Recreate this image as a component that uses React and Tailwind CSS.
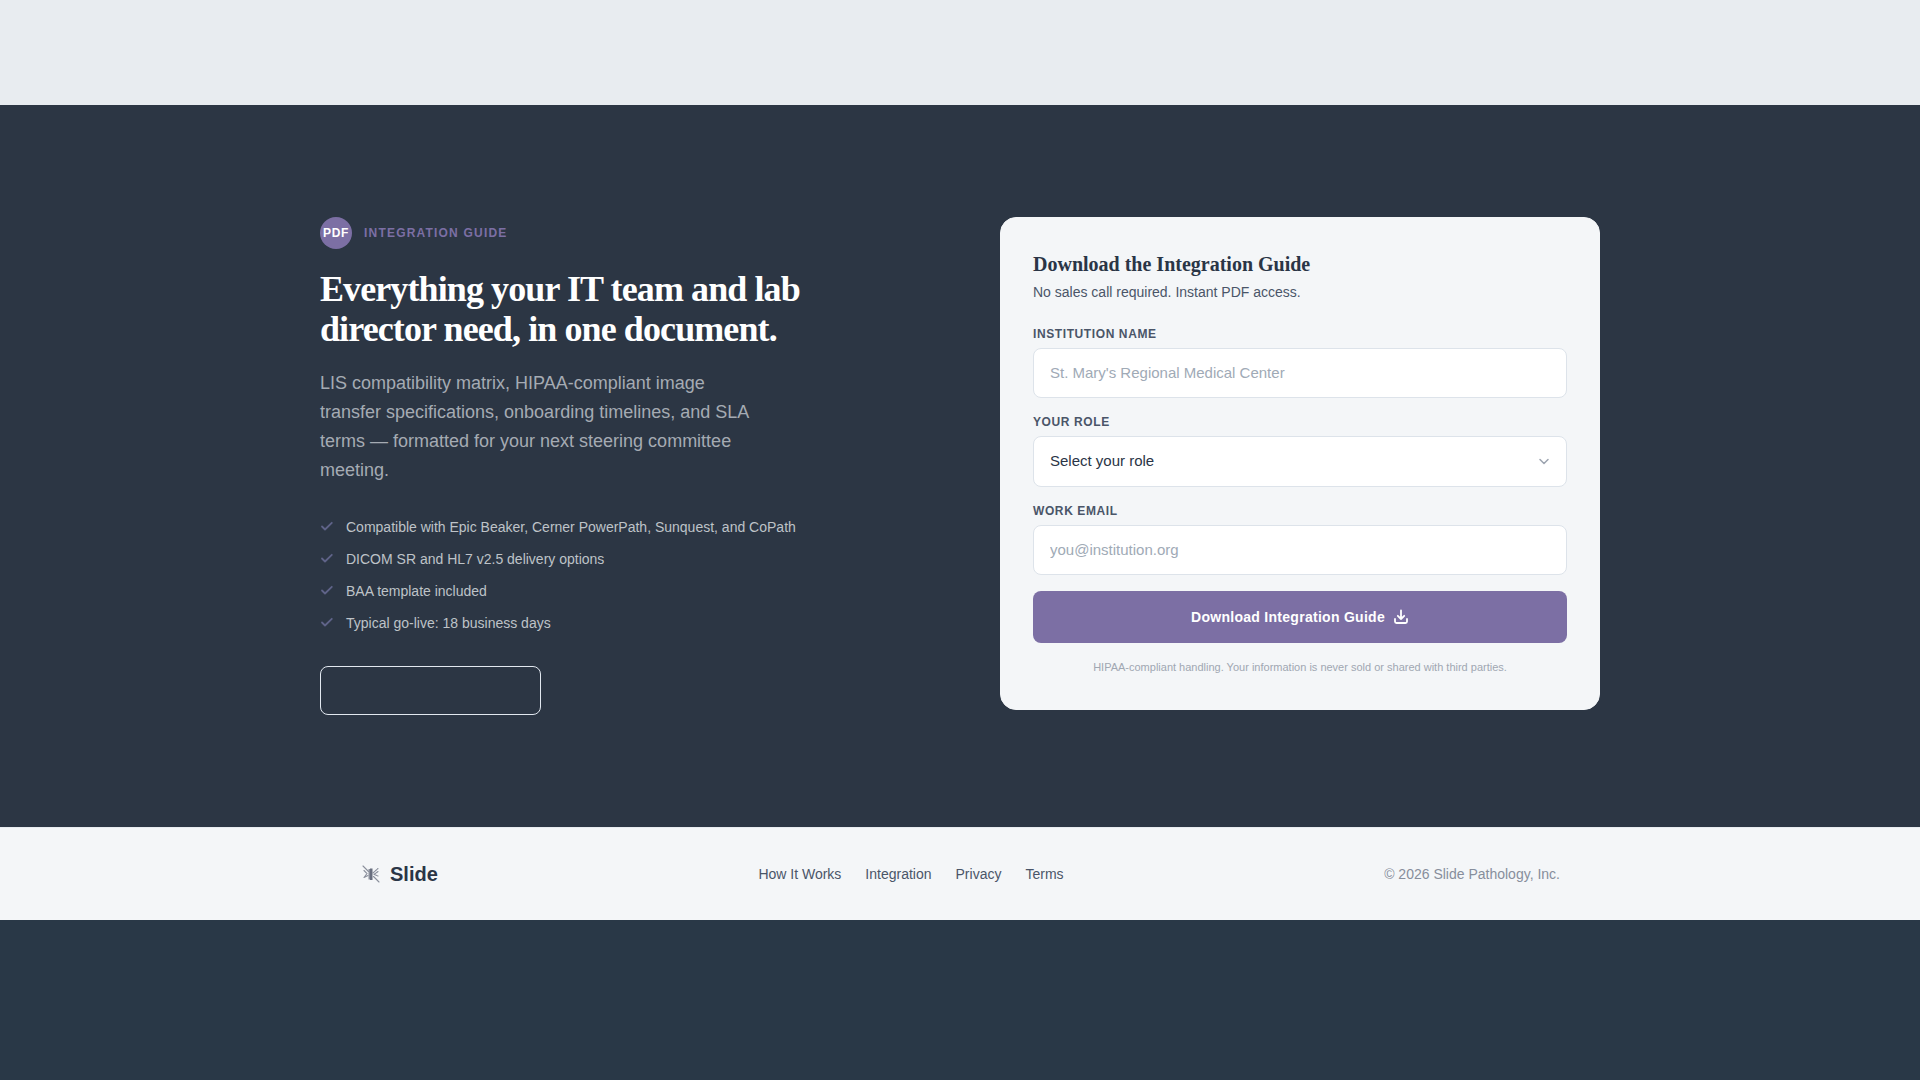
const features = [
  'Compatible with Epic Beaker, Cerner PowerPath, Sunquest, and CoPath',
  'DICOM SR and HL7 v2.5 delivery options',
  'BAA template included',
  'Typical go-live: 18 business days',
];

const roles = ['Lab Director', 'Pathologist', 'IT / LIS Manager', 'Administrator'];

const footerLinks = ['How It Works', 'Integration', 'Privacy', 'Terms'];

const labelClass = 'block mb-1.5 text-xs leading-4 font-bold uppercase tracking-wider text-[#4a5568]';
const fieldClass =
  'block w-full px-4 text-[15px] bg-white border border-[#dde3ea] rounded-lg text-[#2a3546] placeholder:text-[#a0aab6] focus:outline-none focus:ring-2 focus:ring-[#7c6fa4]';

const CheckIcon = () => (
  <svg width="14" height="14" viewBox="0 0 14 14" fill="none" className="shrink-0 mt-0.5" aria-hidden="true">
    <path d="M2 7.5L5 10.5L11.8 3.8" stroke="#5f6388" strokeWidth="1.8" strokeLinecap="round" strokeLinejoin="round" />
  </svg>
);

const DownloadIcon = () => (
  <svg width="16" height="16" viewBox="0 0 16 16" fill="none" aria-hidden="true">
    <path
      d="M8 1.5V10M8 10L4.8 6.8M8 10L11.2 6.8M2 10V12.5C2 13.5 2.6 14 3.5 14H12.5C13.4 14 14 13.5 14 12.5V10"
      stroke="currentColor"
      strokeWidth="1.8"
      strokeLinecap="round"
      strokeLinejoin="round"
    />
  </svg>
);

const Logo = () => (
  <svg width="22" height="22" viewBox="0 0 22 22" fill="none" aria-hidden="true">
    <g stroke="#8a8f9c" strokeWidth="1.1" strokeLinecap="round">
      <path d="M3 3L8.5 8.5M13.5 13.5L19 19M4 7.5L7 10.5L4 14.5M8 12.5L4 14.5" />
      <path d="M13 10L18 5.5M18 8.5L14 11.5L18 13" strokeDasharray="2 1" />
    </g>
    <rect x="8.5" y="6" width="1.5" height="10.5" fill="#8a8f9c" />
    <rect x="10" y="5.5" width="2.5" height="11.5" fill="#686e7e" />
  </svg>
);

const GuideIntro = () => (
  <div>
    <div className="flex items-center gap-3">
      <span className="flex items-center justify-center w-8 h-8 rounded-full bg-[#7c6fa4] text-white text-xs font-bold tracking-wider">
        PDF
      </span>
      <span className="text-xs font-bold uppercase tracking-widest text-[#7c6fa4]">Integration Guide</span>
    </div>
    <h2 className="mt-5 font-['Liberation_Serif',serif] font-bold text-[36px] leading-10 tracking-tight text-white">
      Everything your IT team and lab director need, in one document.
    </h2>
    <p className="mt-5 max-w-[440px] text-lg leading-[29px] text-[#a5abb3]">
      LIS compatibility matrix, HIPAA-compliant image transfer specifications, onboarding timelines, and SLA terms —
      formatted for your next steering committee meeting.
    </p>
    <ul className="mt-8 flex flex-col gap-[11px]">
      {features.map((feature) => (
        <li key={feature} className="flex items-start gap-3 text-sm leading-[21px] text-[#bec3c8]">
          <CheckIcon />
          {feature}
        </li>
      ))}
    </ul>
    <button
      type="button"
      aria-label="Integration details"
      className="mt-8 block w-[221px] h-[49px] rounded-lg border border-[#e2e8f0]"
    />
  </div>
);

const GuideForm = () => (
  <div className="p-8 rounded-2xl border border-[#f4f6f8] bg-[#f4f6f8]">
    <h3 className="font-['Liberation_Serif',serif] font-bold text-xl leading-7 text-[#2a3546]">
      Download the Integration Guide
    </h3>
    <p className="mt-1 text-sm leading-5 text-[#4a5568]">No sales call required. Instant PDF access.</p>
    <form className="mt-6 flex flex-col gap-4" onSubmit={(e) => e.preventDefault()}>
      <div>
        <label htmlFor="institution" className={labelClass}>
          Institution Name
        </label>
        <input
          id="institution"
          type="text"
          placeholder="St. Mary's Regional Medical Center"
          className={`${fieldClass} h-[50px] pb-0.5`}
        />
      </div>
      <div>
        <label htmlFor="role" className={labelClass}>
          Your Role
        </label>
        <div className="relative">
          <select id="role" defaultValue="" className={`${fieldClass} h-[51px] appearance-none`}>
            <option value="">Select your role</option>
            {roles.map((role) => (
              <option key={role} value={role}>
                {role}
              </option>
            ))}
          </select>
          <svg
            width="14"
            height="14"
            viewBox="0 0 14 14"
            fill="none"
            className="absolute right-4 inset-y-0 my-auto pointer-events-none"
            aria-hidden="true"
          >
            <path d="M3 4.5L7 8.5L11 4.5" stroke="#9ca3af" strokeWidth="1.5" strokeLinecap="round" strokeLinejoin="round" />
          </svg>
        </div>
      </div>
      <div>
        <label htmlFor="email" className={labelClass}>
          Work Email
        </label>
        <input
          id="email"
          type="email"
          placeholder="you@institution.org"
          className={`${fieldClass} h-[50px] pb-0.5`}
        />
      </div>
      <button
        type="submit"
        className="flex items-center justify-center gap-2 h-[52px] rounded-lg bg-[#7c6fa4] text-white text-sm font-bold tracking-[0.02em]"
      >
        Download Integration Guide
        <DownloadIcon />
      </button>
      <p className="pb-0.5 text-center text-[11px] leading-4 text-[#a0a7b2]">
        HIPAA-compliant handling. Your information is never sold or shared with third parties.
      </p>
    </form>
  </div>
);

const Footer = () => (
  <footer className="px-10 py-8 border-t border-[#e8ecf0] bg-[#f4f6f8]">
    <div className="max-w-[1200px] mx-auto flex items-center justify-between">
      <a href="#" className="flex items-center gap-2 text-xl leading-7 font-bold text-[#2a3546]">
        <Logo />
        Slide
      </a>
      <nav className="flex gap-6">
        {footerLinks.map((link) => (
          <a key={link} href="#" className="text-sm text-[#4a5568]">
            {link}
          </a>
        ))}
      </nav>
      <p className="text-sm text-[#878e9c]">© 2026 Slide Pathology, Inc.</p>
    </div>
  </footer>
);

const App = () => {
  return (
    <div className="min-h-screen bg-[#293847] font-['Liberation_Sans',Arial,sans-serif]">
      <div className="h-[105px] bg-[#e8ecf0]" />
      <section className="px-10 py-28 bg-[#2c3644]">
        <div className="max-w-[1280px] mx-auto grid grid-cols-2 items-start gap-20">
          <GuideIntro />
          <GuideForm />
        </div>
      </section>
      <Footer />
    </div>
  );
};

export default App;
